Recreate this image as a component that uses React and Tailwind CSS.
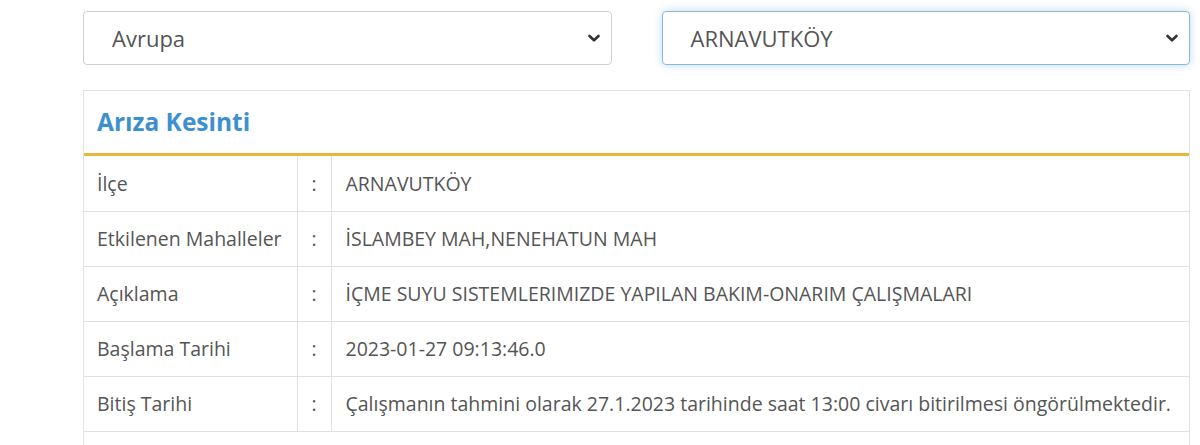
import React from 'react';

const rows = [
  { label: 'İlçe', value: 'ARNAVUTKÖY' },
  { label: 'Etkilenen Mahalleler', value: 'İSLAMBEY MAH,NENEHATUN MAH' },
  { label: 'Açıklama', value: 'İÇME SUYU SISTEMLERIMIZDE YAPILAN BAKIM-ONARIM ÇALIŞMALARI' },
  { label: 'Başlama Tarihi', value: '2023-01-27 09:13:46.0' },
  { label: 'Bitiş Tarihi', value: 'Çalışmanın tahmini olarak 27.1.2023 tarihinde saat 13:00 civarı bitirilmesi öngörülmektedir.' },
];

const Chevron = () => (
  <svg width="14" height="10" viewBox="0 0 14 10" className="shrink-0">
    <path d="M2.5 3 L7 7.3 L11.5 3" fill="none" stroke="#333" strokeWidth="2.6" strokeLinecap="round" strokeLinejoin="round" />
  </svg>
);

// Seçim kutusu
const Select = ({ value, focused }) => (
  <div
    className={`flex-1 h-[54px] flex items-center justify-between pl-[28px] pr-[10px] rounded-[4px] bg-white border ${
      focused ? 'border-[#8eb8d8] shadow-[0_0_8px_rgba(102,175,233,0.45)]' : 'border-[#cfcfcf]'
    }`}
  >
    <span className="text-[22px] text-[#555]">{value}</span>
    <Chevron />
  </div>
);

function App() {
  return (
    <div className="min-h-screen bg-white font-['Open_Sans',sans-serif] text-[#555]">
      <div className="w-[1107px] ml-[83px] pt-[11px]">
        {/* Üst seçimler */}
        <div className="flex gap-[50px]">
          <Select value="Avrupa" />
          <Select value="ARNAVUTKÖY" focused />
        </div>

        {/* Arıza paneli */}
        <div className="mt-[25px] border border-[#e3e3e3]">
          <div className="h-[65px] flex items-center px-[13px] border-b-[3px] border-[#e5b73b]">
            <h2 className="text-[24.5px] font-bold text-[#3d90d0] pt-[1px]">Arıza Kesinti</h2>
          </div>
          <table className="w-full border-collapse text-[19.5px]">
            <tbody>
              {rows.map((r) => (
                <tr key={r.label} className="h-[55px] border-b border-[#e0e0e0]">
                  <td className="w-[213px] pl-[13px] border-r border-[#e0e0e0] whitespace-nowrap">{r.label}</td>
                  <td className="w-[34px] text-center border-r border-[#e0e0e0]">:</td>
                  <td className="pl-[14px] whitespace-nowrap">{r.value}</td>
                </tr>
              ))}
              <tr className="h-[55px]">
                <td colSpan={3}></td>
              </tr>
            </tbody>
          </table>
        </div>
      </div>
    </div>
  );
}

export default App;
